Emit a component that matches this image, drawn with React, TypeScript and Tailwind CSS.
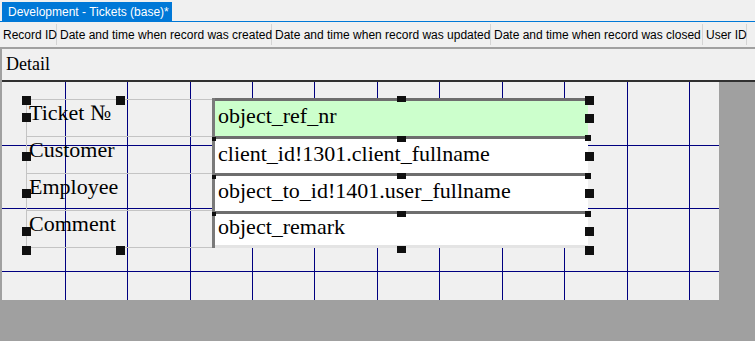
import React from "react";

const COLUMNS = [
  { label: "Record ID", width: 57 },
  { label: "Date and time when record was created", width: 215 },
  { label: "Date and time when record was updated", width: 219 },
  { label: "Date and time when record was closed", width: 212 },
  { label: "User ID", width: 44 },
];

const LABELS = ["Ticket №", "Customer", "Employee", "Comment"];
const FIELDS = [
  "object_ref_nr",
  "client_id!1301.client_fullname",
  "object_to_id!1401.user_fullname",
  "object_remark",
];

// handle positions relative to the design canvas (origin = page 2,82)
const HANDLES: [number, number, number, number][] = [
  // label group
  [20, 14, 9, 9],
  [114, 14, 9, 9],
  [20, 31, 9, 9],
  [20, 70, 9, 9],
  [20, 107, 9, 9],
  [20, 145, 9, 9],
  [20, 164, 9, 9],
  [114, 164, 9, 9],
  // field group
  [583, 14, 9, 9],
  [583, 32, 9, 9],
  [583, 70, 9, 9],
  [583, 107, 9, 9],
  [583, 145, 9, 9],
  [583, 164, 9, 9],
  [395, 164, 9, 7],
  [395, 14, 9, 6],
  [395, 54, 9, 6],
  [395, 91, 9, 6],
  [395, 129, 9, 6],
  [583, 53, 6, 6],
  [583, 91, 6, 6],
  [583, 129, 6, 6],
  [210, 55, 4, 4],
  [210, 93, 4, 4],
  [210, 130, 4, 4],
];

function DesignGrid() {
  const xs = [63, 125, 188, 250, 312, 375, 437, 500, 562, 625, 687];
  const ys = [63, 126, 189];
  return (
    <svg width="717" height="218" className="absolute left-0 top-0">
      {xs.map((x) => (
        <line key={"v" + x} x1={x + 0.5} y1={0} x2={x + 0.5} y2={218} stroke="#000080" strokeWidth={1} />
      ))}
      {ys.map((y) => (
        <line key={"h" + y} x1={0} y1={y + 0.5} x2={717} y2={y + 0.5} stroke="#000080" strokeWidth={1} />
      ))}
    </svg>
  );
}

export default function App() {
  return (
    <div
      className="relative h-[341px] w-[755px] overflow-hidden bg-[#f0f0f0] text-black"
      style={{ fontFamily: '"Liberation Sans", Arial, sans-serif' }}
    >
      {/* document tab */}
      <div className="flex h-[22px] items-end border-b border-[#0078d7] px-[2px]">
        <div className="flex h-[19px] w-[170px] items-center whitespace-nowrap bg-[#0078d7] pl-[6px] text-[12px] leading-none text-white">
          Development - Tickets (base)*
        </div>
      </div>

      {/* column header */}
      <div className="flex h-[25px] items-center text-[12px] leading-none">
        {COLUMNS.map((c) => (
          <div
            key={c.label}
            className="flex h-[21px] items-center whitespace-nowrap border-r border-[#d4d4d4] pl-[3px]"
            style={{ width: c.width }}
          >
            {c.label}
          </div>
        ))}
      </div>

      {/* designer */}
      <div className="flex flex-col border-l-2 border-t-2 border-[#a0a0a0] bg-[#a0a0a0]" style={{ fontFamily: '"Liberation Serif", serif' }}>
        <div className="flex h-[33px] items-center border-b-2 border-[#303030] bg-[#f0f0f0] pl-[4px] text-[18px]">
          Detail
        </div>
        <div className="flex h-[259px]">
          <div className="relative h-[218px] w-[717px] bg-[#f0f0f0]">
            <DesignGrid />

            {/* labels */}
            <div className="absolute left-[24px] top-[17px] flex w-[187px] flex-col">
              {LABELS.map((l, i) => (
                <div
                  key={l}
                  className={
                    "flex h-[38px] items-center border border-[#c4c4c4] pl-[2px] text-[22px] leading-none " +
                    (i > 0 ? "-mt-px" : "")
                  }
                >
                  <span className="-mt-[10px]">{l}</span>
                </div>
              ))}
            </div>

            {/* fields */}
            <div className="absolute left-[210px] top-[16px] flex w-[378px] flex-col border-l-[3px] border-[#7a7a7a] pr-[2px]">
              {FIELDS.map((f, i) => (
                <div
                  key={f}
                  className={
                    "flex h-[37.5px] items-center border-t-[3px] border-[#6e6e6e] pl-[3px] text-[22px] leading-none " +
                    (i === 0 ? "bg-[#ccffcc]" : "bg-white") +
                    (i === 3 ? " border-b-[3px] border-b-[#e4e4e4]" : "")
                  }
                >
                  <span className="-mt-[4px]">{f}</span>
                </div>
              ))}
            </div>

            {HANDLES.map(([x, y, w, h], i) => (
              <div
                key={i}
                className="absolute bg-[#101010]"
                style={{ left: x, top: y, width: w, height: h }}
              />
            ))}
          </div>
          <div className="flex-1" />
        </div>
      </div>
    </div>
  );
}
